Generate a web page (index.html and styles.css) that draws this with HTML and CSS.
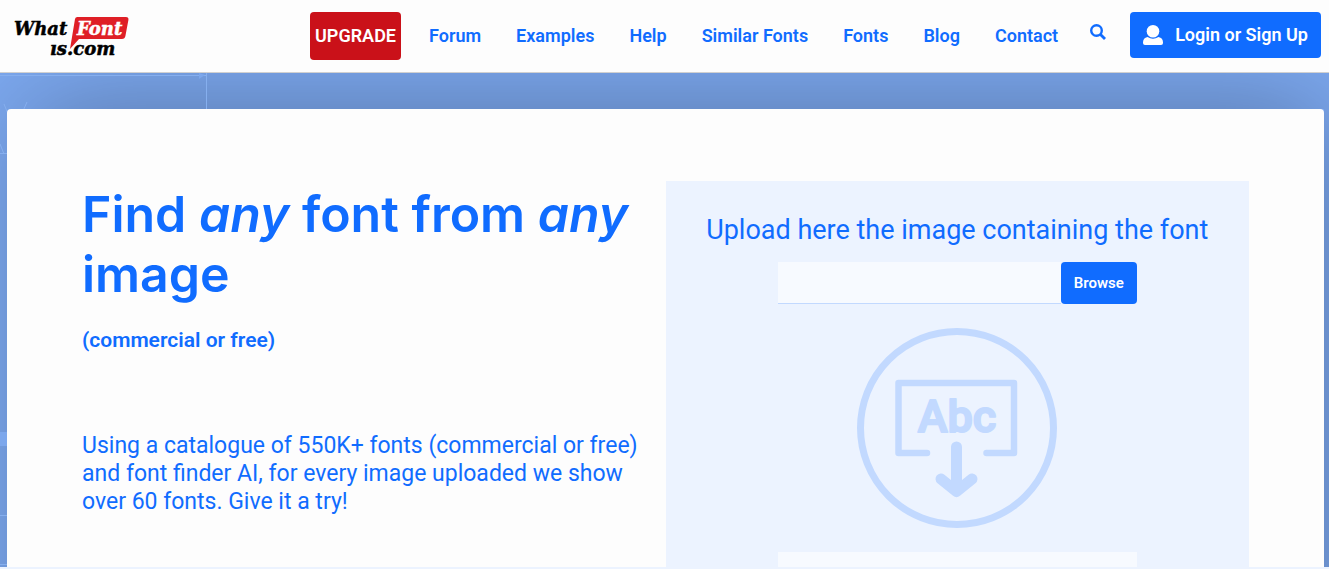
FILE: index.html
```html
<!DOCTYPE html>
<html lang="en">
<head>
    <meta charset="UTF-8">
    <meta name="viewport" content="width=device-width, initial-scale=1.0">
    <title>What Font Is</title>
    <link rel="stylesheet" href="styles.css">
</head>
<body>
    <header class="site-header">
        <a class="logo" href="#" aria-label="WhatFontIs.com">
            <svg width="120" height="44" viewBox="0 0 120 44">
                <path class="logo-bubble" d="M62 3q.4-2 2.400-2h48.500q3 0 2.500 3l-3 16q-.5 3-3.500 3H66l-9 10z"/>
                <text x="1" y="19">What</text>
                <text class="logo-font" x="64" y="19">Font</text>
                <text x="37" y="39">ıs.com</text>
            </svg>
        </a>

        <nav class="main-nav">
            <a class="upgrade-btn" href="#">UPGRADE</a>
            <a href="#">Forum</a>
            <a href="#">Examples</a>
            <a href="#">Help</a>
            <a href="#">Similar Fonts</a>
            <a href="#">Fonts</a>
            <a href="#">Blog</a>
            <a href="#">Contact</a>
        </nav>

        <button class="search-btn" type="button" aria-label="Search">
            <svg width="16" height="16" viewBox="0 0 16 16" fill="none" stroke="currentColor">
                <circle cx="6.500" cy="6.500" r="5.300" stroke-width="2.400"/>
                <path d="M10.500 10.500l4.500 4.500" stroke-width="2.800"/>
            </svg>
        </button>

        <button class="login-btn" type="button">
            <svg width="20" height="20" viewBox="0 0 20 20" fill="currentColor">
                <circle cx="10" cy="6.300" r="6.300"/>
                <path d="M4.500 12q5.500 3.500 11 0q4.500.8 4.500 5.500v.5q0 2-2 2H2q-2 0-2-2v-.5Q0 12.800 4.500 12z"/>
            </svg>
            Login or Sign Up
        </button>
    </header>

    <main class="hero">
        <!-- Drafting lines behind the card -->
        <svg class="hero-lines" width="208" height="500" viewBox="0 0 208 500" aria-hidden="true">
            <path d="M0 2.500h206M206.500 0v36M4 31l4 10M27 29l-4 9M0 71l4 10M0 80.500h8M0 442.500h8M0 491.500h8"/>
            <path class="line-fill" d="M199 0l6 2-6 4zM0 359h8v14H0z"/>
        </svg>

        <div class="hero-card">
            <section class="intro">
                <h1>Find <em>any</em> font from <em>any</em> image</h1>
                <h2>(commercial or free)</h2>
                <p>Using a catalogue of 550K+ fonts (commercial or free) and font finder AI, for every image uploaded we show over 60 fonts. Give it a try!</p>
            </section>

            <form class="upload-panel">
                <label for="image-file">Upload here the image containing the font</label>
                <div class="file-row">
                    <input type="text" id="image-file">
                    <button class="browse-btn" type="button">Browse</button>
                </div>

                <svg class="drop-icon" width="200" height="200" viewBox="0 0 200 200">
                    <circle cx="100" cy="100" r="96.500" stroke-width="7"/>
                    <path d="M70 125H41.500V55H157v70h-27.500" stroke-width="6.500"/>
                    <path d="M99.500 119v43M84 151l15.500 12.500L115 151" stroke-width="11"/>
                    <text x="100" y="104">Abc</text>
                </svg>

                <input class="url-input" type="text" aria-label="Image URL">
            </form>
        </div>
    </main>
    <div class="bottom-strip"></div>
</body>
</html>
```

FILE: styles.css
```css
* {
    box-sizing: border-box;
}

body {
    display: flex;
    flex-direction: column;
    height: 100vh;
    margin: 0;
    overflow: hidden;
    font-family: Roboto, sans-serif;
    color: #106cff;
    background: #fdfdfd;
}

a {
    color: inherit;
    text-decoration: none;
}

button {
    border: none;
    font-family: inherit;
    cursor: pointer;
}

.site-header {
    display: flex;
    flex-shrink: 0;
    align-items: flex-start;
    padding: 12px 8px 12px 13px;
    border-bottom: 1px solid #d0d0d0;
    background: #fdfdfd;
}

.logo {
    margin-top: 4px;
}

.logo svg {
    display: block;
}

.logo text {
    font: italic bold 18px "DejaVu Serif", serif;
    fill: #000;
    stroke: #000;
    stroke-width: 0.5px;
}

.logo .logo-bubble {
    fill: #df1f26;
}

.logo .logo-font {
    fill: #fff;
    stroke: #fff;
}

.main-nav {
    display: flex;
    align-items: center;
    gap: 35px;
    margin-left: auto;
    font-size: 18px;
    font-weight: 600;
    line-height: 48px;
}

.upgrade-btn {
    margin-right: -7px;
    padding: 0 5px;
    border-radius: 4px;
    background: #ca1119;
    color: #fff;
}

.search-btn {
    margin: 12px 24px 0 32px;
    padding: 0;
    background: none;
    color: #106cff;
}

.search-btn svg {
    display: block;
}

.login-btn {
    display: flex;
    align-items: center;
    gap: 12px;
    padding: 0 13px;
    border-radius: 4px;
    background: #106cff;
    color: #fff;
    font-size: 18px;
    font-weight: 600;
    line-height: 46px;
}

.hero {
    position: relative;
    display: flex;
    flex: 1;
    min-height: 0;
    padding: 36px 5px 0 7px;
    overflow: hidden;
    background: #7ca8ef;
}

.hero-lines {
    position: absolute;
    top: 0;
    left: 0;
    z-index: 1;
    fill: none;
    stroke: #86afee;
}

.hero-lines .line-fill {
    fill: #7ca7ec;
    stroke: none;
}

.hero-card {
    position: relative;
    z-index: 2;
    display: grid;
    grid-template-columns: 1fr 1fr;
    width: 100%;
    padding: 72px 75px 0;
    border-radius: 4px 4px 0 0;
    background: #fdfdfd;
}

/* Shadow sits below the drafting lines */
.hero::before {
    content: "";
    position: absolute;
    inset: 36px 5px -100px 32px;
    box-shadow: 0 0 100px rgba(0, 0, 0, 0.3);
}

.intro h1 {
    margin: 3px 0 24px;
    font-family: Inter, sans-serif;
    font-size: 50px;
    font-weight: 600;
    line-height: 60px;
}

.intro h2 {
    margin: 0 0 80px;
    font-size: 21px;
    font-weight: 600;
    line-height: 24px;
}

.intro p {
    margin: 0;
    font-size: 23px;
    line-height: 28px;
}

.upload-panel {
    display: flex;
    flex-direction: column;
    align-items: center;
    padding-top: 33px;
    background: #ecf3ff;
}

.upload-panel label {
    font-size: 27px;
    line-height: 32px;
}

.file-row {
    display: flex;
    width: 359px;
    margin: 16px 0 24px;
}

.upload-panel input {
    height: 42px;
    border: none;
    border-bottom: 1px solid #c2d9ff;
    background: #f7faff;
}

.file-row input {
    flex: 1;
    min-width: 0;
}

.browse-btn {
    padding: 0 13px;
    border-radius: 4px;
    background: #106cff;
    color: #fff;
    font-size: 15px;
    font-weight: 600;
}

.drop-icon {
    flex-shrink: 0;
    fill: none;
    stroke: #c2d9ff;
    stroke-linecap: round;
    stroke-linejoin: round;
}

.drop-icon text {
    font-size: 45px;
    font-weight: 500;
    text-anchor: middle;
    fill: #c2d9ff;
    stroke-width: 2px;
}

.upload-panel .url-input {
    flex-shrink: 0;
    width: 359px;
    margin-top: 24px;
}

.bottom-strip {
    flex-shrink: 0;
    height: 2px;
    background: #ecf3ff;
}
```
